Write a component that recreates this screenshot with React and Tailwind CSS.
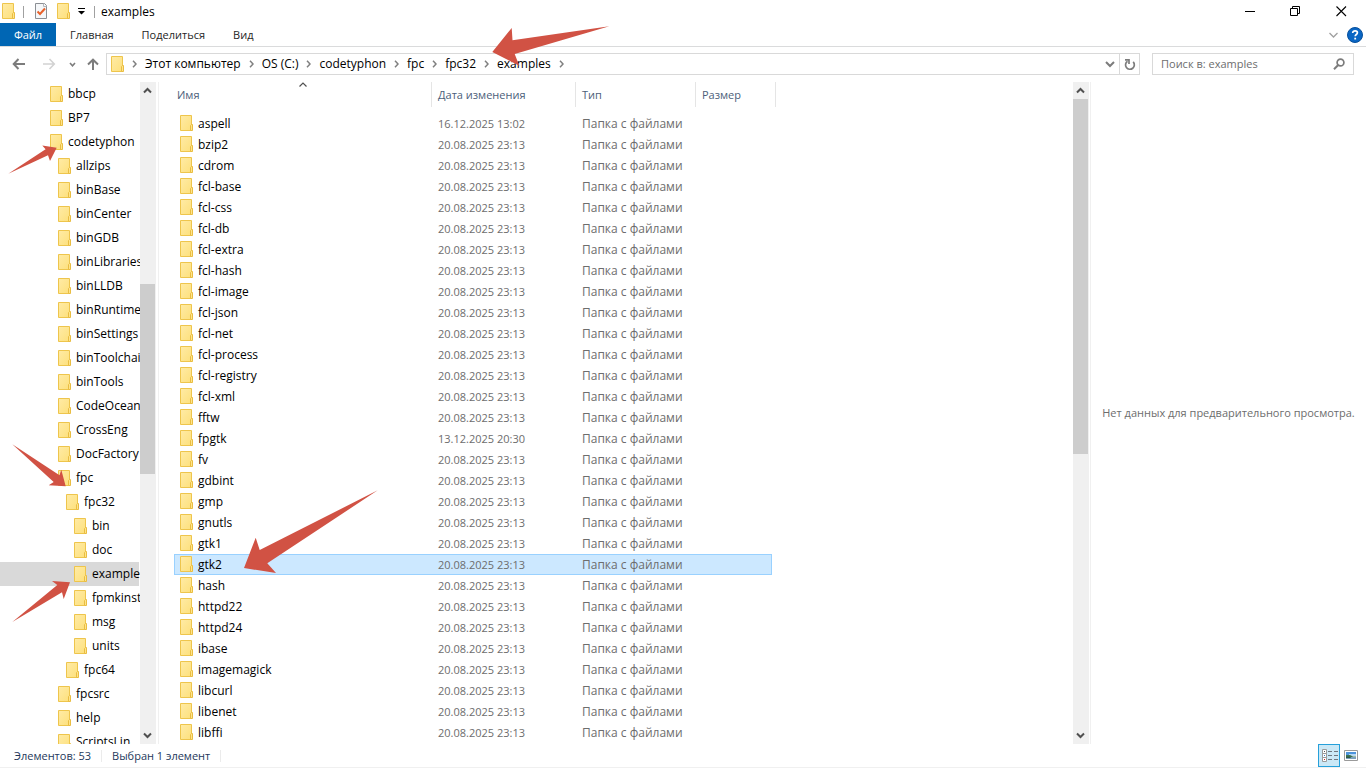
const tree = [
  ["bbcp", 0], ["BP7", 0], ["codetyphon", 0], ["allzips", 1], ["binBase", 1], ["binCenter", 1],
  ["binGDB", 1], ["binLibraries", 1], ["binLLDB", 1], ["binRuntimes", 1], ["binSettings", 1],
  ["binToolchains", 1], ["binTools", 1], ["CodeOcean", 1], ["CrossEng", 1], ["DocFactory", 1],
  ["fpc", 1], ["fpc32", 2], ["bin", 3], ["doc", 3], ["examples", 3], ["fpmkinst", 3],
  ["msg", 3], ["units", 3], ["fpc64", 2], ["fpcsrc", 1], ["help", 1], ["ScriptsLin", 1],
];

const indent = ["pl-[50px]", "pl-[58px]", "pl-[66px]", "pl-[74px]"];

const files = [
  "aspell", "bzip2", "cdrom", "fcl-base", "fcl-css", "fcl-db", "fcl-extra", "fcl-hash",
  "fcl-image", "fcl-json", "fcl-net", "fcl-process", "fcl-registry", "fcl-xml", "fftw",
  "fpgtk", "fv", "gdbint", "gmp", "gnutls", "gtk1", "gtk2", "hash", "httpd22", "httpd24",
  "ibase", "imagemagick", "libcurl", "libenet", "libffi",
];

const dates = { aspell: "16.12.2025 13:02", fpgtk: "13.12.2025 20:30" };

const crumbs = ["Этот компьютер", "OS (C:)", "codetyphon", "fpc", "fpc32", "examples"];

function Folder() {
  return (
    <svg width="14" height="17" viewBox="0 0 14 17" className="shrink-0" aria-hidden="true">
      <defs>
        <linearGradient id="folder" x1="0" y1="0" x2="1" y2="1">
          <stop offset="0" stopColor="#ffeba6" />
          <stop offset="1" stopColor="#fde07c" />
        </linearGradient>
      </defs>
      <path d="M0.5 0.5H11.5V15.5H0.5Z" fill="url(#folder)" stroke="#eec54c" />
      <path d="M10.5 10.5L11.5 9.5H12.5V15.5H10.5Z" fill="#ffe48a" stroke="#e9bd42" />
    </svg>
  );
}

function Chevron({ d, w, h, color, stroke }) {
  return (
    <svg width={w} height={h} viewBox={`0 0 ${w} ${h}`} className="shrink-0" aria-hidden="true">
      <path d={d} fill="none" stroke={color} strokeWidth={stroke} />
    </svg>
  );
}

function CrumbChevron() {
  return <Chevron d="M1 0.8L4 4L1 7.2" w={5} h={8} color="#808080" stroke={1.5} />;
}

function ScrollBar({ before, thumb, after }) {
  return (
    <div className="flex w-4 shrink-0 flex-col bg-[#f0f0f0]">
      <button aria-label="Прокрутить вверх" className="flex h-[17px] shrink-0 items-center justify-center pr-px">
        <Chevron d="M1 5.5L4.5 2L8 5.5" w={9} h={7} color="#505050" stroke={2} />
      </button>
      <div className="flex min-h-0 flex-1 flex-col">
        <div className={before} />
        <div className={`mr-px bg-[#cdcdcd] ${thumb}`} />
        <div className={after} />
      </div>
      <button aria-label="Прокрутить вниз" className="flex h-[17px] shrink-0 items-center justify-center pr-px">
        <Chevron d="M1 1.5L4.5 5L8 1.5" w={9} h={7} color="#505050" stroke={2} />
      </button>
    </div>
  );
}

function TitleBar() {
  return (
    <header className="flex h-[23px] shrink-0 items-center pl-0.5">
      <Folder />
      <span className="ml-[7px] h-3 w-px bg-[#a0a0a0]" />
      <button aria-label="Свойства" className="ml-[11px]">
        <svg width="13" height="17" viewBox="0 0 13 17" className="block">
          <path d="M0.5 0.5H9.5L11.5 2.5V15.5H0.5Z" fill="#f5f7f9" stroke="#8b8f94" />
          <path d="M8.5 0.5V3.5H11.5" fill="none" stroke="#b4b8bc" />
          <path d="M2.5 8.5L5 11L10 5.5" fill="none" stroke="#e8622c" strokeWidth="2" />
        </svg>
      </button>
      <button aria-label="Новая папка" className="ml-[9px]"><Folder /></button>
      <button aria-label="Настройка панели быстрого доступа" className="ml-[7px]">
        <svg width="8" height="7" viewBox="0 0 8 7" className="block">
          <path d="M0 0H7V1H0ZM0 3H7L3.5 6.5Z" fill="#000" />
        </svg>
      </button>
      <span className="ml-2 h-3 w-px bg-[#a0a0a0]" />
      <h1 className="ml-1.5 flex-1">examples</h1>
      <div className="flex h-full pr-0.5">
        <button aria-label="Свернуть" className="flex w-[46px] items-center justify-center">
          <svg width="11" height="11"><path d="M0 5.5H10" stroke="#000" /></svg>
        </button>
        <button aria-label="Восстановить" className="flex w-[45px] items-center justify-center">
          <svg width="11" height="11" fill="none" stroke="#000">
            <path d="M0.5 2.5H7.5V9.5H0.5ZM2.5 2.5V0.5H9.5V7.5H7.5" />
          </svg>
        </button>
        <button aria-label="Закрыть" className="flex w-[46px] items-center justify-center">
          <svg width="11" height="11"><path d="M0.5 0.5L10 10M10 0.5L0.5 10" stroke="#000" strokeWidth="1.1" /></svg>
        </button>
      </div>
    </header>
  );
}

function Ribbon() {
  return (
    <nav className="flex h-6 shrink-0 items-stretch border-b border-[#dadbdc] text-[11px] text-[#262626]">
      <button className="w-14 bg-[#0066b4] text-white">Файл</button>
      <button className="px-3.5">Главная</button>
      <button className="px-3.5">Поделиться</button>
      <button className="px-3.5">Вид</button>
      <span className="flex-1" />
      <button aria-label="Развернуть ленту" className="px-[9px]">
        <Chevron d="M0.5 1L4.5 5L8.5 1" w={9} h={6} color="#a0a0a0" stroke={1.3} />
      </button>
      <button aria-label="Справка" className="pr-[3px]">
        <svg width="16" height="16" viewBox="0 0 16 16">
          <circle cx="8" cy="8" r="7.5" fill="#0a66c4" stroke="#07509c" />
          <path d="M5.7 6.1C5.7 4.5 6.7 3.8 8.1 3.8C9.5 3.8 10.4 4.6 10.4 5.8C10.4 7.5 8.2 7.5 8.2 9.3" fill="none" stroke="#fff" strokeWidth="1.7" />
          <path d="M7.3 10.7H9.1V12.5H7.3Z" fill="#fff" />
        </svg>
      </button>
    </nav>
  );
}

function AddressRow() {
  return (
    <div className="mb-px flex h-[34px] shrink-0 items-center pr-3">
      <button aria-label="Назад" className="ml-3">
        <svg width="14" height="12" fill="none" stroke="#7c7c7c" strokeWidth="2"><path d="M2 6H13M6.5 1L1.7 6L6.5 11" /></svg>
      </button>
      <button aria-label="Вперёд" className="ml-4">
        <svg width="14" height="12" fill="none" stroke="#d2d2d2" strokeWidth="1.6"><path d="M1 6H12M7.5 1L12.3 6L7.5 11" /></svg>
      </button>
      <button aria-label="Последние расположения" className="ml-[13px]">
        <Chevron d="M1 1L3.5 3.8L6 1" w={7} h={5} color="#7c7c7c" stroke={1.6} />
      </button>
      <button aria-label="Вверх" className="ml-[11px]">
        <svg width="12" height="13" fill="none" stroke="#7c7c7c" strokeWidth="2"><path d="M6 12V2M1 6.5L6 1.7L11 6.5" /></svg>
      </button>
      <div className="ml-[7px] flex h-[22px] flex-1 items-center border border-[#d9d9d9] pl-1">
        <Folder />
        <ol className="ml-[7px] flex flex-1 items-center gap-2">
          <li><CrumbChevron /></li>
          {crumbs.map((c) => (
            <li key={c} className="flex items-center gap-2">
              <a href="#" className="whitespace-nowrap">{c}</a>
              <CrumbChevron />
            </li>
          ))}
        </ol>
        <button aria-label="Предыдущие расположения" className="px-1">
          <Chevron d="M1 1L5 5L9 1" w={10} h={7} color="#7c7c7c" stroke={2} />
        </button>
        <button aria-label="Обновить" className="flex h-full w-5 items-center justify-center border-l border-[#d9d9d9]">
          <svg width="12" height="13" fill="none" stroke="#7c7c7c" strokeWidth="1.7">
            <path d="M3.5 3.2A4.4 4.4 0 1 0 9.2 3.9" />
            <path d="M1 1.8H5V6" />
          </svg>
        </button>
      </div>
      <label className="ml-3 flex h-[22px] w-[202px] items-center border border-[#d9d9d9] pr-2 pl-2">
        <input type="text" aria-label="Поиск" placeholder="Поиск в: examples" className="min-w-0 flex-1 text-[11px] outline-none placeholder:text-[#6d6d6d]" />
        <svg width="12" height="12" fill="none" stroke="#7c7c7c">
          <circle cx="7.5" cy="4.5" r="3.4" strokeWidth="1.7" />
          <path d="M5.2 7L1 11.2" strokeWidth="2" />
        </svg>
      </label>
    </div>
  );
}

function Tree() {
  return (
    <ul className="w-[140px] shrink-0 overflow-hidden">
      {tree.map(([name, level]) => (
        <li key={name} className={name === "examples" ? "mr-px bg-[#d9d9d9]" : "mr-px"}>
          <a href="#" className={`flex h-6 items-center gap-1 whitespace-nowrap ${indent[level]}`}>
            <Folder />
            {name}
          </a>
        </li>
      ))}
    </ul>
  );
}

const heading = "relative flex items-center border-r border-[#e5e5e5] px-1.5 font-normal";

function FileList() {
  return (
    <main className="min-w-0 flex-1 overflow-hidden border-l border-[#f0f0f0] pl-[15px]">
      <table className="block">
        <thead className="block">
          <tr className="grid h-[25px] grid-cols-[258px_144px_120px_80px] text-[11px] text-[#4c607a]">
            <th className={heading}>
              <button className="-ml-[3px]">Имя</button>
              <span className="absolute inset-x-0 top-0 flex justify-center">
                <Chevron d="M0.5 4.5L4 1L7.5 4.5" w={8} h={6} color="#505050" stroke={1.2} />
              </span>
            </th>
            <th className={heading}><button>Дата изменения</button></th>
            <th className={heading}><button>Тип</button></th>
            <th className={heading}><button>Размер</button></th>
          </tr>
        </thead>
        <tbody className="block pt-1.5">
          {files.map((name) => (
            <tr
              key={name}
              className={`grid h-[21px] w-[598px] grid-cols-[258px_144px_120px_76px] items-center text-[#6d6d6d] ${
                name === "gtk2" ? "bg-[#cce8ff] ring-1 ring-[#99d1ff] ring-inset" : ""
              }`}
            >
              <td className="flex items-center gap-1 px-1.5 text-black"><Folder />{name}</td>
              <td className="px-1.5 text-[11px]">{dates[name] || "20.08.2025 23:13"}</td>
              <td className="px-1.5">Папка с файлами</td>
              <td />
            </tr>
          ))}
        </tbody>
      </table>
    </main>
  );
}

function StatusBar() {
  return (
    <footer className="flex h-6 shrink-0 items-center border-b border-[#f0f0f0] pl-3.5 text-[11px] text-[#1e395b]">
      <span>Элементов: 53</span>
      <span className="mx-2.5 h-3 w-px bg-[#ebebeb]" />
      <span>Выбран 1 элемент</span>
      <span className="mx-2.5 h-3 w-px bg-[#ebebeb]" />
      <span className="flex-1" />
      <button aria-label="Таблица" className="flex h-[23px] w-[22px] items-center justify-center border border-[#26a0da] bg-[#cbe8f6] pl-0.5">
        <svg width="16" height="13" fill="none">
          <path d="M0.5 0.5H4.5V4.5H0.5ZM0.5 4.5H4.5V8.5H0.5ZM0.5 8.5H4.5V12.5H0.5Z" fill="#fff" stroke="#9a9a9a" />
          <path d="M2 2H3V3H2Z" fill="#555" />
          <path d="M2 6H3V7H2Z" fill="#3a7bc8" />
          <path d="M2 10H3V11H2Z" fill="#d02020" />
          <path d="M6 2.5H10M12 2.5H16M6 6.5H10M12 6.5H16M6 10.5H10M12 10.5H16" stroke="#6f7780" />
        </svg>
      </button>
      <button aria-label="Крупные значки" className="flex h-[23px] w-[22px] items-center justify-center">
        <svg width="14" height="11">
          <path d="M0.5 0.5H13.5V10.5H0.5Z" fill="#fff" stroke="#9a9a9a" />
          <path d="M2 2H12V6H2Z" fill="#4d94dc" />
          <path d="M5 4H12V6H5Z" fill="#b8d8f2" />
          <path d="M2 5L6 5L9 6.5H12V7H2Z" fill="#3e7450" />
          <path d="M2 7H12V9H2Z" fill="#7ca0bb" />
          <path d="M2 6.5H6L7 8H2Z" fill="#2f5a4c" />
        </svg>
      </button>
      <span className="w-1" />
    </footer>
  );
}

function Arrows() {
  return (
    <svg width="1366" height="768" className="pointer-events-none absolute top-0 left-0" fill="#d15244" aria-hidden="true">
      <path d="M492.3 52L511.7 28L512.5 40.3L609.3 26.3L514.7 54L519.3 65.7Z" />
      <path d="M8.3 173.7L45.6 149.3L42.3 145.5L56.7 147.7L50 161L48 155.3Z" />
      <path d="M12.3 444.3L59.5 475.3L61.3 469.7L65.7 486.3L48.7 485.3L53.7 482Z" />
      <path d="M12.3 622L57.3 585L52 581L70 582.3L63.7 599L62 592.3Z" />
      <path d="M244 568L255.7 537.7L259.7 550L377.7 490.3L267.3 563.3L276 573Z" />
    </svg>
  );
}

export default function App() {
  return (
    <div className="relative flex h-screen flex-col overflow-hidden bg-white font-['Open_Sans','Noto_Sans',sans-serif] text-[12px] leading-4 text-black">
      <TitleBar />
      <Ribbon />
      <AddressRow />
      <div className="flex min-h-0 flex-1">
        <Tree />
        <div className="flex shrink-0 pr-0.5">
          <ScrollBar before="grow-[185]" thumb="grow-[190]" after="grow-[253]" />
        </div>
        <FileList />
        <ScrollBar before="grow-0" thumb="grow-[355]" after="grow-[273]" />
        <aside className="ml-px flex w-[276px] shrink-0 items-center justify-center border-l border-[#f0f0f0] text-[11px] whitespace-nowrap text-[#6d6d6d]">
          Нет данных для предварительного просмотра.
        </aside>
      </div>
      <StatusBar />
      <Arrows />
    </div>
  );
}
